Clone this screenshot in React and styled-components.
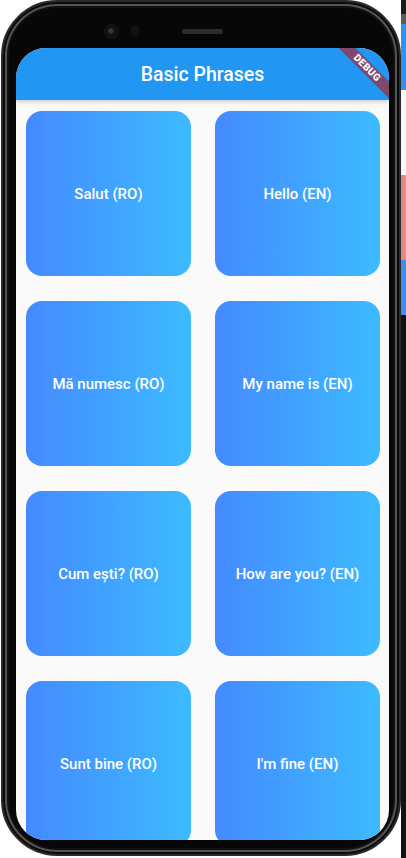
import styled, { createGlobalStyle } from "styled-components";

const phrases = [
  "Salut (RO)",
  "Hello (EN)",
  "Mă numesc (RO)",
  "My name is (EN)",
  "Cum ești? (RO)",
  "How are you? (EN)",
  "Sunt bine (RO)",
  "I'm fine (EN)",
];

// bits of whatever sits behind the phone on the right
const strip = [
  { h: 14, c: "#1b1b1b" },
  { h: 10, c: "#5a5a5a" },
  { h: 66, c: "#2d95f0" },
  { h: 85, c: "#f7f7f7" },
  { h: 85, c: "#e58a7e" },
  { h: 55, c: "#3a8ff0" },
  { h: 543, c: "#121212" },
];

function App() {
  return (
    <>
      <GlobalStyle />
      <Stage>
        <Phone>
          <TopBezel>
            <Camera />
            <Sensor />
            <Speaker />
          </TopBezel>
          <Screen>
            <AppBar>Basic Phrases</AppBar>
            <DebugBanner>DEBUG</DebugBanner>
            <Grid>
              {phrases.map((text) => (
                <Card key={text}>{text}</Card>
              ))}
            </Grid>
          </Screen>
        </Phone>
        <Strip>
          {strip.map((s, i) => (
            <StripPart key={i} $h={s.h} $color={s.c} />
          ))}
        </Strip>
      </Stage>
    </>
  );
}

const GlobalStyle = createGlobalStyle`
  html, body {
    margin: 0;
    padding: 0;
    background: #ffffff;
  }
  body {
    font-family: Roboto, "Liberation Sans", sans-serif;
    overflow: hidden;
  }
`;

const Stage = styled.div`
  width: 406px;
  height: 858px;
  display: flex;
  background: #ffffff;
`;

const Phone = styled.div`
  box-sizing: border-box;
  width: 400px;
  height: 856px;
  margin-left: 1px;
  padding: 0 10px 14px 13px;
  border-radius: 56px;
  background: #070707;
  border: 2px solid #2b2b2b;
  box-shadow: inset 0 0 0 2px #0a0a0a, inset 0 0 0 4px #555555,
    inset 0 0 0 6px #111111;
  display: flex;
  flex-direction: column;
  position: relative;
`;

const TopBezel = styled.div`
  height: 46px;
  display: flex;
  align-items: center;
  padding-left: 89px;
  padding-top: 12px;
  box-sizing: border-box;
`;

const Camera = styled.div`
  width: 13px;
  height: 13px;
  border-radius: 50%;
  background: radial-gradient(circle at 45% 45%, #3a3a3a 0 2px, #141414 3px, #0c0c0c 100%);
  box-shadow: 0 0 0 1px #161616;
`;

const Sensor = styled.div`
  width: 8px;
  height: 12px;
  margin-left: 13px;
  border-radius: 4px;
  background: #111111;
`;

const Speaker = styled.div`
  width: 41px;
  height: 5px;
  margin-left: 43px;
  border-radius: 3px;
  background: #2c2c2c;
`;

const Screen = styled.div`
  flex: 1;
  position: relative;
  overflow: hidden;
  border-radius: 30px;
  background: #fafafa;
  display: flex;
  flex-direction: column;
`;

const AppBar = styled.div`
  height: 52px;
  flex-shrink: 0;
  display: flex;
  align-items: center;
  justify-content: center;
  background: #2196f3;
  color: #ffffff;
  font-size: 19.5px;
  font-weight: 500;
  box-shadow: 0 2px 4px rgba(0, 0, 0, 0.18);
  position: relative;
  z-index: 1;
`;

const DebugBanner = styled.div`
  position: absolute;
  top: 14px;
  right: -38px;
  width: 120px;
  height: 12px;
  line-height: 12px;
  transform: rotate(45deg);
  background: rgba(183, 28, 28, 0.63);
  color: #ffffff;
  font-size: 10px;
  font-weight: 900;
  text-align: center;
  letter-spacing: 0.3px;
  z-index: 2;
`;

const Grid = styled.div`
  display: grid;
  grid-template-columns: repeat(2, 165px);
  grid-auto-rows: 165px;
  column-gap: 24px;
  row-gap: 25px;
  padding: 11px 10px 0;
`;

const Card = styled.div`
  border-radius: 16px;
  background: linear-gradient(to right, #448aff, #3dbbff);
  color: #ffffff;
  font-size: 15px;
  font-weight: 500;
  display: flex;
  align-items: center;
  justify-content: center;
`;

const Strip = styled.div`
  width: 5px;
  display: flex;
  flex-direction: column;
`;

const StripPart = styled.div`
  height: ${(p) => p.$h}px;
  background: ${(p) => p.$color};
`;

export default App;
